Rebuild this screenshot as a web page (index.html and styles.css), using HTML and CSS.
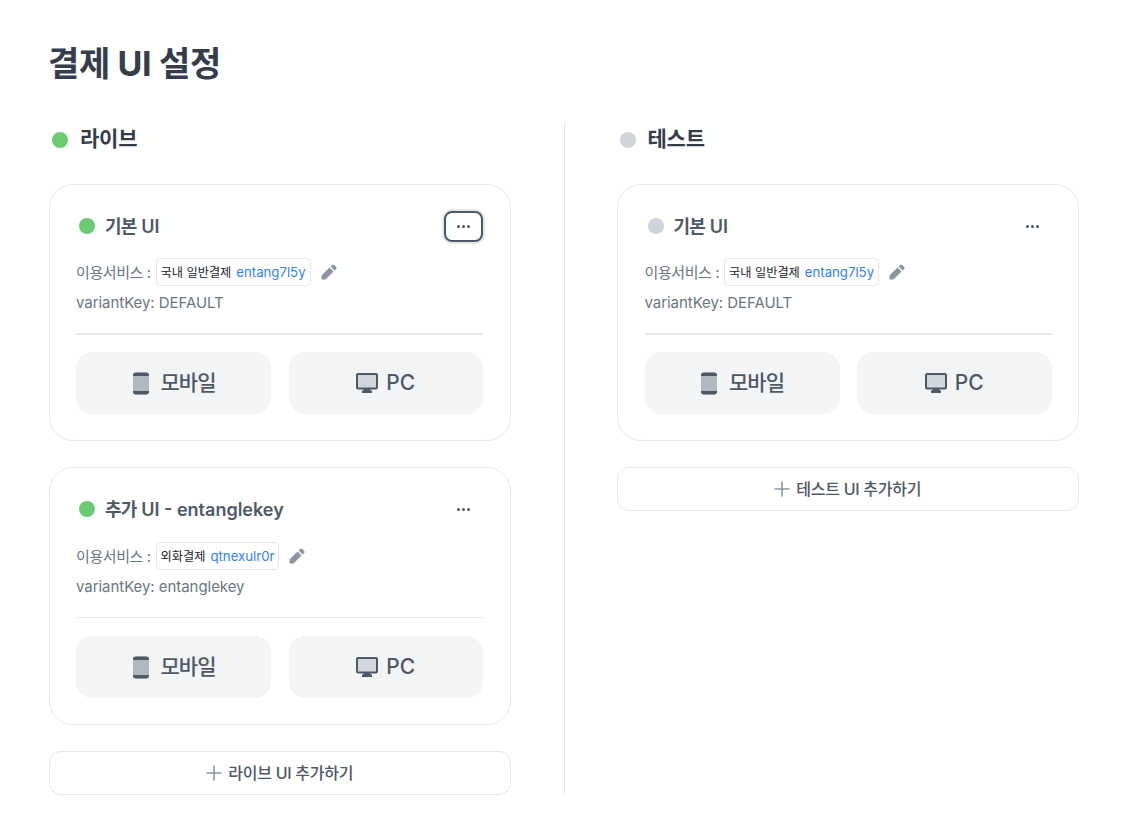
FILE: index.html
```html
<!DOCTYPE html>
<html lang="ko">
<head>
<meta charset="utf-8">
<title>결제 UI 설정</title>
<link rel="stylesheet" href="styles.css">
</head>
<body>
<svg class="defs" width="0" height="0" aria-hidden="true">
  <symbol id="i-mobile" viewBox="0 0 18 23"><rect x="1" y="0.5" width="16" height="22" rx="3" fill="#b0b8c1"/><path d="M1 4V3.5a3 3 0 0 1 3-3h10a3 3 0 0 1 3 3V4zM1 19h16v.5a3 3 0 0 1-3 3H4a3 3 0 0 1-3-3z" fill="#4e5968"/></symbol>
  <symbol id="i-pc" viewBox="0 0 22 20"><rect x="1" y="1" width="20" height="14.5" rx="1" fill="#d1d6db" stroke="#4e5968" stroke-width="2"/><path d="M8 15.5h6l.8 2.4H7.2z" fill="#4e5968"/><rect x="6" y="17.5" width="10" height="2.5" rx=".5" fill="#4e5968"/></symbol>
  <symbol id="i-pen" viewBox="0 0 16 16"><path d="M11.1.9a1.4 1.4 0 0 1 2 0l2 2a1.4 1.4 0 0 1 0 2l-1.5 1.5-4-4zM8.5 3.5l4 4-8 8H.5v-4z" fill="#8b95a1"/></symbol>
  <symbol id="i-plus" viewBox="0 0 16 16"><path d="M8 .5v15M.5 8h15" fill="none" stroke="#8b95a1" stroke-width="1.6"/></symbol>
</svg>
<main class="page">
  <h1 class="title">결제 UI 설정</h1>
  <div class="columns">
    <section class="col col-live">
      <h2 class="col-head"><span class="dot dot-live"></span><span class="head-text">라이브</span></h2>
      <div class="stack">
        <article class="card">
          <div class="card-top">
            <div class="card-name"><span class="dot-sm dot-live"></span><span class="name-text"><span class="ko">기본</span> UI</span></div>
            <button class="more more-focus"><span></span><span></span><span></span></button>
          </div>
          <div class="svc"><span class="svc-label">이용서비스 :</span><span class="tag">국내 일반결제<b>entang7l5y</b></span><svg class="pen"><use href="#i-pen"/></svg></div>
          <div class="vkey">variantKey: DEFAULT</div>
          <hr class="rule rule-thick">
          <div class="btns">
            <button class="dev"><svg class="ic-m"><use href="#i-mobile"/></svg><span class="ko-lg">모바일</span></button>
            <button class="dev"><svg class="ic-p"><use href="#i-pc"/></svg><span class="pc-text">PC</span></button>
          </div>
        </article>
        <article class="card">
          <div class="card-top">
            <div class="card-name"><span class="dot-sm dot-live"></span><span class="name-text"><span class="ko">추가</span> UI - entanglekey</span></div>
            <button class="more"><span></span><span></span><span></span></button>
          </div>
          <div class="svc"><span class="svc-label">이용서비스 :</span><span class="tag">외화결제<b>qtnexulr0r</b></span><svg class="pen"><use href="#i-pen"/></svg></div>
          <div class="vkey">variantKey: entanglekey</div>
          <hr class="rule">
          <div class="btns">
            <button class="dev"><svg class="ic-m"><use href="#i-mobile"/></svg><span class="ko-lg">모바일</span></button>
            <button class="dev"><svg class="ic-p"><use href="#i-pc"/></svg><span class="pc-text">PC</span></button>
          </div>
        </article>
        <button class="add"><svg class="plus"><use href="#i-plus"/></svg><span class="add-text">라이브 UI 추가하기</span></button>
      </div>
    </section>
    <section class="col col-test">
      <h2 class="col-head"><span class="dot dot-test"></span><span class="head-text">테스트</span></h2>
      <div class="stack">
        <article class="card">
          <div class="card-top">
            <div class="card-name"><span class="dot-sm dot-test"></span><span class="name-text"><span class="ko">기본</span> UI</span></div>
            <button class="more"><span></span><span></span><span></span></button>
          </div>
          <div class="svc"><span class="svc-label">이용서비스 :</span><span class="tag">국내 일반결제<b>entang7l5y</b></span><svg class="pen"><use href="#i-pen"/></svg></div>
          <div class="vkey">variantKey: DEFAULT</div>
          <hr class="rule rule-thick">
          <div class="btns">
            <button class="dev"><svg class="ic-m"><use href="#i-mobile"/></svg><span class="ko-lg">모바일</span></button>
            <button class="dev"><svg class="ic-p"><use href="#i-pc"/></svg><span class="pc-text">PC</span></button>
          </div>
        </article>
        <button class="add"><svg class="plus"><use href="#i-plus"/></svg><span class="add-text">테스트 UI 추가하기</span></button>
      </div>
    </section>
  </div>
</main>
</body>
</html>
```

FILE: styles.css
```css
* { box-sizing: border-box; }
html, body { margin: 0; background: #fff; }
body { font-family: Inter, "Noto Sans CJK KR", sans-serif; color: #333d4b; }
.defs { position: absolute; }
.page { padding: 39px 54px 0 49px; }
.title { margin: 0 0 34px -1px; font-size: 34px; line-height: 49px; font-weight: 700; letter-spacing: -0.35px; }
.columns { display: flex; }
.col-live { width: 516px; padding-right: 53px; border-right: 1px solid #e5e8eb; }
.col-test { width: 515px; padding-left: 52px; }
.col-head { margin: 0 0 28px 3px; height: 34px; display: flex; align-items: center; gap: 12px; font-size: 21px; font-weight: 600; letter-spacing: -0.25px; }
.head-text { padding-bottom: 4px; }
.dot { width: 16px; height: 16px; border-radius: 50%; margin-top: 2px; }
.dot-sm { width: 16px; height: 16px; border-radius: 50%; }
.dot-live { background: #6bcb72; }
.dot-test { background: #ced4da; }
.stack { display: flex; flex-direction: column; gap: 26px; }
.card { height: 257px; border: 1px solid #e5e8eb; border-radius: 24px; padding: 25px 27px 0 26px; }
.col-test .card { padding-left: 27px; padding-right: 26px; }
.card + .card { height: 258px; }
.card + .card .svc { margin-top: 17px; }
.card-top { display: flex; justify-content: space-between; align-items: center; height: 32px; padding-left: 3px; }
.card-name { display: flex; align-items: center; gap: 10px; font-size: 18px; font-weight: 600; color: #4e5968; }
.name-text { padding-bottom: 2px; }
.ko { letter-spacing: -0.7px; }
.more { width: 39px; height: 31px; display: flex; align-items: center; justify-content: center; gap: 2px; padding: 0; background: #fff; border: 0; border-radius: 8px; }
.more span { width: 3px; height: 3px; border-radius: 50%; background: #4e5968; }
.more-focus { border: 2px solid #4e5968; box-shadow: 0 0 0 2px #e5e8eb; }
.svc { display: flex; align-items: center; margin-top: 16px; height: 28px; font-size: 15px; color: #6b7684; gap: 5px; }
.svc-label { padding-bottom: 2px; letter-spacing: -0.42px; }
.tag { height: 28px; display: flex; align-items: center; gap: 5px; padding: 0 4px; border: 1px solid #e5e8eb; border-radius: 4px; font-size: 12.2px; color: #191f28; white-space: pre; }
.tag b { font-weight: 400; font-size: 13.2px; color: #3182f6; }
.pen { width: 16px; height: 16px; margin-left: 5px; }
.vkey { margin-top: 5px; height: 24px; line-height: 24px; font-size: 15px; color: #6b7684; letter-spacing: -0.05px; }
.rule { margin: 18px 0 18px; height: 1px; border: 0; background: #e5e8eb; }
.rule-thick { height: 2px; margin-bottom: 17px; }
.btns { display: flex; gap: 18px; }
.col-test .btns { gap: 17px; }
.dev { flex: 1; height: 62px; display: flex; align-items: center; justify-content: center; gap: 10px; padding: 0; border: 0; border-radius: 16px; background: #f2f4f6; font: inherit; font-size: 21px; font-weight: 500; color: #4e5968; }
.dev:first-child { flex: 0 0 195px; }
.ko-lg { letter-spacing: -1px; padding-bottom: 4px; }
.pc-text { padding-bottom: 1px; margin-left: -2px; }
.ic-m { width: 18px; height: 23px; margin-right: 1px; }
.ic-p { width: 22px; height: 20px; }
.add { height: 44px; display: flex; align-items: center; justify-content: center; gap: 6px; padding: 0; background: #fff; border: 1px solid #e5e8eb; border-radius: 12px; font: inherit; font-size: 16px; font-weight: 500; color: #4e5968; letter-spacing: -0.27px; }
.add-text { padding-bottom: 2px; }
.plus { width: 16px; height: 16px; }
```
